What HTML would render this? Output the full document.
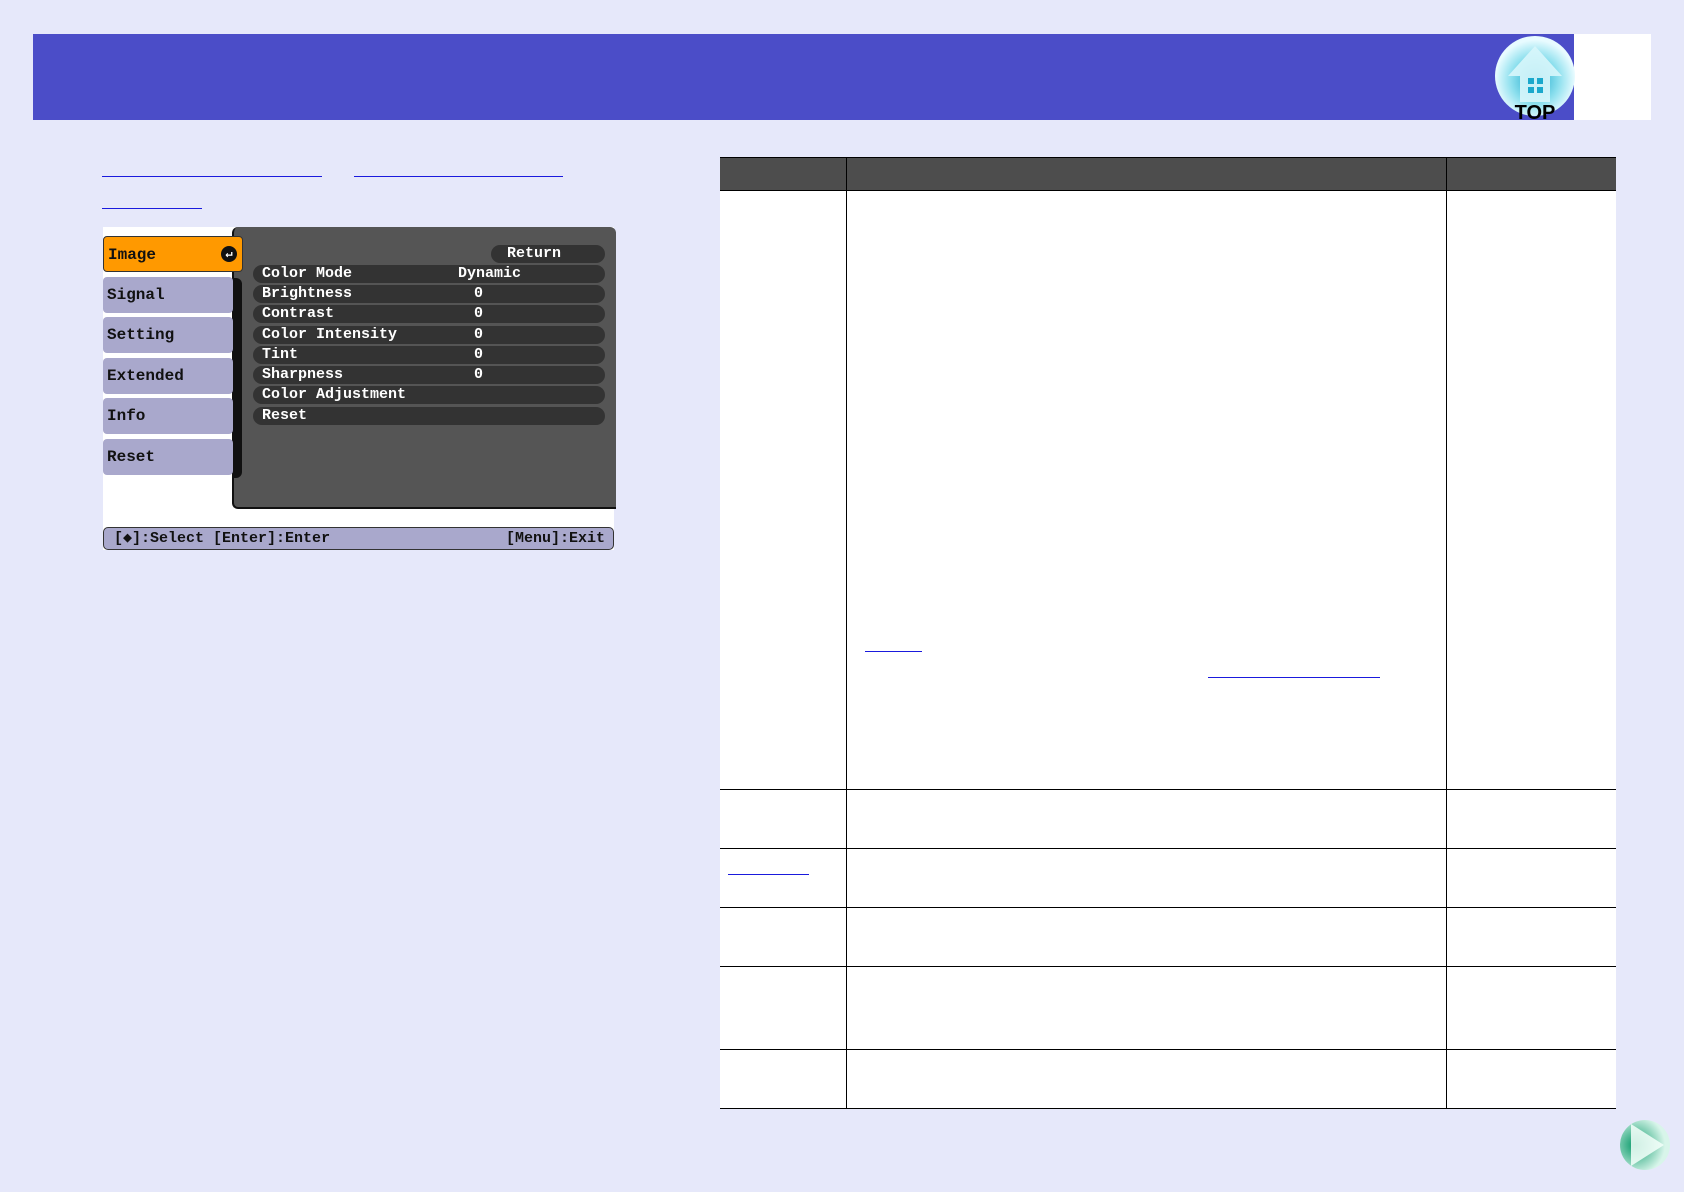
<!DOCTYPE html>
<html><head><style>
body{margin:0;width:1684px;height:1192px;background:#e6e8fa;position:relative;overflow:hidden;font-family:"Liberation Mono",monospace}
.a{position:absolute}
.hdr{left:33px;top:34px;width:1541px;height:86px;background:#4b4dc8}
.wh{left:1574px;top:34px;width:77px;height:86px;background:#fff}
.ln{position:absolute;height:1px;background:#1a1add}
.tb{left:720px;top:157px;width:896px;height:952px;background:#fff}
.hl{position:absolute;left:720px;width:896px;height:1px;background:#000}
.vl{position:absolute;width:1px;background:#000;top:157px;height:952px}
.mi{position:absolute;left:103px;width:130px;height:36px;background:#a9a8cc;border-radius:4px;color:#111;font:bold 16px "Liberation Mono",monospace;line-height:36px;padding-left:4px;box-sizing:border-box}
.row{position:absolute;left:253px;width:352px;height:18px;background:#333;border-radius:9px;color:#fff;font:bold 15px "Liberation Mono",monospace;line-height:18px}
.row span{position:absolute}
</style></head><body>
<div class="a hdr"></div><div class="a wh"></div>
<svg class="a" style="left:1490px;top:34px" width="90" height="90">
<defs><radialGradient id="g" cx="50%" cy="55%" r="50%"><stop offset="0" stop-color="#18a8cc"/><stop offset="0.6" stop-color="#8ee0ee"/><stop offset="1" stop-color="#e8fbff"/></radialGradient></defs>
<circle cx="45" cy="42" r="40" fill="url(#g)"/>
<path d="M45 12 L72 42 L60 42 L60 68 L30 68 L30 42 L18 42Z" fill="#d8f6fb" opacity=".9"/>
<rect x="38" y="44" width="6" height="6" fill="#1aa8cc"/><rect x="47" y="44" width="6" height="6" fill="#1aa8cc"/>
<rect x="38" y="53" width="6" height="6" fill="#1aa8cc"/><rect x="47" y="53" width="6" height="6" fill="#1aa8cc"/>
<text x="45" y="85" text-anchor="middle" font-family="Liberation Sans" font-weight="bold" font-size="20" fill="#000">TOP</text>
</svg>
<div class="ln" style="left:102px;top:176px;width:220px"></div>
<div class="ln" style="left:354px;top:176px;width:209px"></div>
<div class="ln" style="left:102px;top:208px;width:100px"></div>
<!-- menu -->
<div class="a" style="left:103px;top:227px;width:511px;height:323px;background:#fff"></div>
<div class="a" style="left:232px;top:227px;width:382px;height:280px;background:#555;border-radius:6px 6px 0 6px;border-left:2px solid #111;border-bottom:2px solid #111"></div>
<div class="a" style="left:232px;top:278px;width:10px;height:200px;background:#111;border-radius:0 6px 6px 0"></div>
<div class="mi" style="top:236px;background:#ff9900;width:140px;border:1px solid #333">Image<span style="position:absolute;right:5px;top:9px;width:16px;height:16px;border-radius:50%;background:#111;color:#fff;font-size:12px;line-height:16px;text-align:center">↵</span></div>
<div class="mi" style="top:277px">Signal</div>
<div class="mi" style="top:317px">Setting</div>
<div class="mi" style="top:358px">Extended</div>
<div class="mi" style="top:398px">Info</div>
<div class="mi" style="top:439px">Reset</div>
<div class="row" style="left:491px;width:114px;top:245px"><span style="left:16px">Return</span></div>
<div class="row" style="top:265px"><span style="left:9px">Color Mode</span><span style="left:205px">Dynamic</span></div>
<div class="row" style="top:285px"><span style="left:9px">Brightness</span><span style="left:221px">0</span></div>
<div class="row" style="top:305px"><span style="left:9px">Contrast</span><span style="left:221px">0</span></div>
<div class="row" style="top:326px"><span style="left:9px">Color Intensity</span><span style="left:221px">0</span></div>
<div class="row" style="top:346px"><span style="left:9px">Tint</span><span style="left:221px">0</span></div>
<div class="row" style="top:366px"><span style="left:9px">Sharpness</span><span style="left:221px">0</span></div>
<div class="row" style="top:386px"><span style="left:9px">Color Adjustment</span></div>
<div class="row" style="top:407px"><span style="left:9px">Reset</span></div>
<div class="a" style="left:103px;top:527px;width:509px;height:21px;background:#a9a8cc;border:1px solid #333;border-radius:5px;font:bold 15px 'Liberation Mono',monospace;line-height:21px;color:#111"><span style="position:absolute;left:10px">[◆]:Select [Enter]:Enter</span><span style="position:absolute;right:8px">[Menu]:Exit</span></div>
<!-- table -->
<div class="a tb"></div>
<div class="a" style="left:720px;top:157px;width:896px;height:33px;background:#4d4d4d"></div>
<div class="hl" style="top:157px"></div><div class="hl" style="top:190px"></div>
<div class="hl" style="top:789px"></div><div class="hl" style="top:848px"></div>
<div class="hl" style="top:907px"></div><div class="hl" style="top:966px"></div>
<div class="hl" style="top:1049px"></div><div class="hl" style="top:1108px"></div>
<div class="vl" style="left:846px"></div><div class="vl" style="left:1446px"></div>
<div class="ln" style="left:728px;top:874px;width:81px"></div>
<div class="ln" style="left:865px;top:651px;width:57px"></div>
<div class="ln" style="left:1208px;top:677px;width:172px"></div>
<svg class="a" style="left:1618px;top:1118px" width="54" height="54">
<defs><radialGradient id="h" cx="30%" cy="50%" r="60%"><stop offset="0" stop-color="#0a9a6a"/><stop offset="1" stop-color="#d8f5ea"/></radialGradient></defs>
<circle cx="27" cy="27" r="25" fill="url(#h)"/>
<path d="M13 6 L46 27 L13 48 Z" fill="#f4fffa" opacity=".85"/>
</svg>
</body></html>
